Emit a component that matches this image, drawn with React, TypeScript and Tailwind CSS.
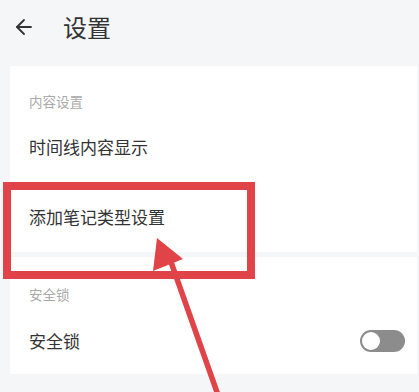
import { ArrowLeft } from "lucide-react";

const font = { fontFamily: '"Noto Sans CJK SC", "Noto Sans", sans-serif' };

function Toggle() {
  return (
    <div className="w-[45px] h-[22px] rounded-full bg-[#8c8c8c] flex items-center px-[2px]">
      <div className="w-[18px] h-[18px] rounded-full bg-white" />
    </div>
  );
}

export default function App() {
  return (
    <div className="relative w-[419px] h-[392px] overflow-hidden bg-[#f5f6f8]" style={font}>
      {/* Header */}
      <div className="h-[66px] flex items-center pl-[12px] pb-[12px]">
        <ArrowLeft size={24} strokeWidth={1.8} className="text-[#333]" />
        <span className="ml-[27px] text-[24px] leading-none text-[#333]">设置</span>
      </div>

      {/* 内容设置 */}
      <div className="ml-[10px] mr-[2px] bg-white">
        <div className="pl-[19px] pt-[26px] h-[46px] text-[13.5px] leading-[18px] text-[#a9a9a9]">内容设置</div>
        <div className="pl-[19px] h-[70px] flex items-center text-[17px] text-[#333]">时间线内容显示</div>
        <div className="pl-[19px] h-[70px] flex items-center text-[17px] text-[#333]">添加笔记类型设置</div>
      </div>

      {/* 安全锁 */}
      <div className="ml-[10px] mr-[2px] mt-[5px] bg-white">
        <div className="pl-[19px] pt-[28px] h-[50px] text-[13.5px] leading-[18px] text-[#a9a9a9]">安全锁</div>
        <div className="pl-[19px] pr-[12px] h-[67px] flex items-center justify-between text-[17px] text-[#333]">
          <span>安全锁</span>
          <Toggle />
        </div>
      </div>

      {/* Annotation overlay */}
      <div className="absolute left-[3px] top-[182px] w-[252px] h-[97px] border-[8px] border-[#e04448]" />
      <svg className="absolute left-0 top-0" width="419" height="392" viewBox="0 0 419 392">
        <line x1="171" y1="262" x2="218" y2="395" stroke="#e04448" strokeWidth="5.5" />
        <polygon points="157,238 183,259 153,271" fill="#e04448" />
      </svg>
    </div>
  );
}
